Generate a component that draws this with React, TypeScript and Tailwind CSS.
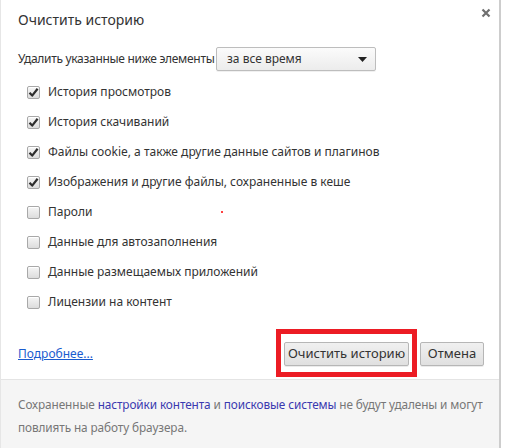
import React from "react";

type Item = { label: string; checked: boolean };

const items: Item[] = [
  { label: "История просмотров", checked: true },
  { label: "История скачиваний", checked: true },
  { label: "Файлы cookie, а также другие данные сайтов и плагинов", checked: true },
  { label: "Изображения и другие файлы, сохраненные в кеше", checked: true },
  { label: "Пароли", checked: false },
  { label: "Данные для автозаполнения", checked: false },
  { label: "Данные размещаемых приложений", checked: false },
  { label: "Лицензии на контент", checked: false },
];

function Checkbox({ checked }: { checked: boolean }) {
  return (
    <span className="flex h-[13px] w-[13px] items-center justify-center rounded-[2px] border border-[#a8a8a8] bg-gradient-to-b from-[#f6f6f6] to-[#dcdcdc] shadow-[inset_0_1px_0_#fff]">
      {checked && (
        <svg width="11" height="11" viewBox="0 0 11 11">
          <path d="M1.5 5.8 L4.2 8.6 L9.6 1.8" fill="none" stroke="#2e2e2e" strokeWidth="2.2" strokeLinejoin="round" />
        </svg>
      )}
    </span>
  );
}

export default function App() {
  return (
    <div className="relative h-[448px] w-[505px] overflow-hidden bg-white font-['Noto_Sans',sans-serif] text-[12px] text-[#333]">
      <div className="flex h-full w-[501px] flex-col border-l border-[#e6e6e6] border-r-2 border-r-[#cdcdcd]">
        {/* header */}
        <div className="flex items-start justify-between pl-[17px] pr-[8px] pt-[9px]">
          <h1 className="text-[14px] leading-[22px] text-[#333]">Очистить историю</h1>
          <svg className="-mt-[1px]" width="10" height="10" viewBox="0 0 10 10">
            <path d="M1.5 1.5 L8.5 8.5 M8.5 1.5 L1.5 8.5" stroke="#6f6f6f" strokeWidth="2.2" />
          </svg>
        </div>

        <div className="mt-[16px] flex h-[24px] items-center pl-[17px]">
          <span className="w-[198px] tracking-[-0.3px]">Удалить указанные ниже элементы</span>
          <div className="flex h-[24px] w-[160px] items-center justify-between rounded-[2px] border border-[#bdbdbd] bg-gradient-to-b from-[#fbfbfb] to-[#ececec] pl-[10px] pr-[8px] shadow-[0_1px_0_rgba(0,0,0,0.06)]">
            <span>за все время</span>
            <svg width="9" height="5" viewBox="0 0 9 5">
              <path d="M0 0 H9 L4.5 5 Z" fill="#222" />
            </svg>
          </div>
        </div>

        <div className="mt-[6px] flex flex-col pl-[26px]">
          {items.map((item) => (
            <label key={item.label} className="flex h-[30px] items-center gap-[8px]">
              <Checkbox checked={item.checked} />
              <span>{item.label}</span>
            </label>
          ))}
        </div>

        {/* footer buttons */}
        <div className="flex h-[62px] items-center justify-between pl-[17px] pr-[15px] pt-[12px]">
          <a className="text-[#1a5ccf] underline">Подробнее...</a>
          <div className="flex gap-[11px]">
            <button className="h-[24px] w-[125px] rounded-[2px] border border-[#b6b6b6] bg-gradient-to-b from-[#f0f0f0] to-[#e0e0e0] text-[13px] text-[#333] shadow-[0_1px_0_rgba(0,0,0,0.08)]">
              Очистить историю
            </button>
            <button className="h-[24px] w-[64px] rounded-[2px] border border-[#b6b6b6] bg-gradient-to-b from-[#f0f0f0] to-[#e0e0e0] text-[13px] text-[#333] shadow-[0_1px_0_rgba(0,0,0,0.08)]">
              Отмена
            </button>
          </div>
        </div>

        <div className="flex-1 border-t border-[#e4e4e4] bg-[#f5f5f5] pl-[17px] pr-[4px] pt-[13px] text-[11.8px] leading-[23px] tracking-[-0.1px] text-[#777]">
          Сохраненные <span className="text-[#3a3ab0]">настройки контента</span> и{" "}
          <span className="text-[#3a3ab0]">поисковые системы</span> не будут удалены и могут повлиять на работу
          браузера.
        </div>
      </div>

      {/* red annotation frame */}
      <div className="absolute left-[276px] top-[329px] h-[48px] w-[141px] border-[5px] border-[#ec1c24]" />
      {/* stray red dot */}
      <div className="absolute left-[221px] top-[211px] h-[2px] w-[2px] rounded-full bg-[#f00]" />
    </div>
  );
}
